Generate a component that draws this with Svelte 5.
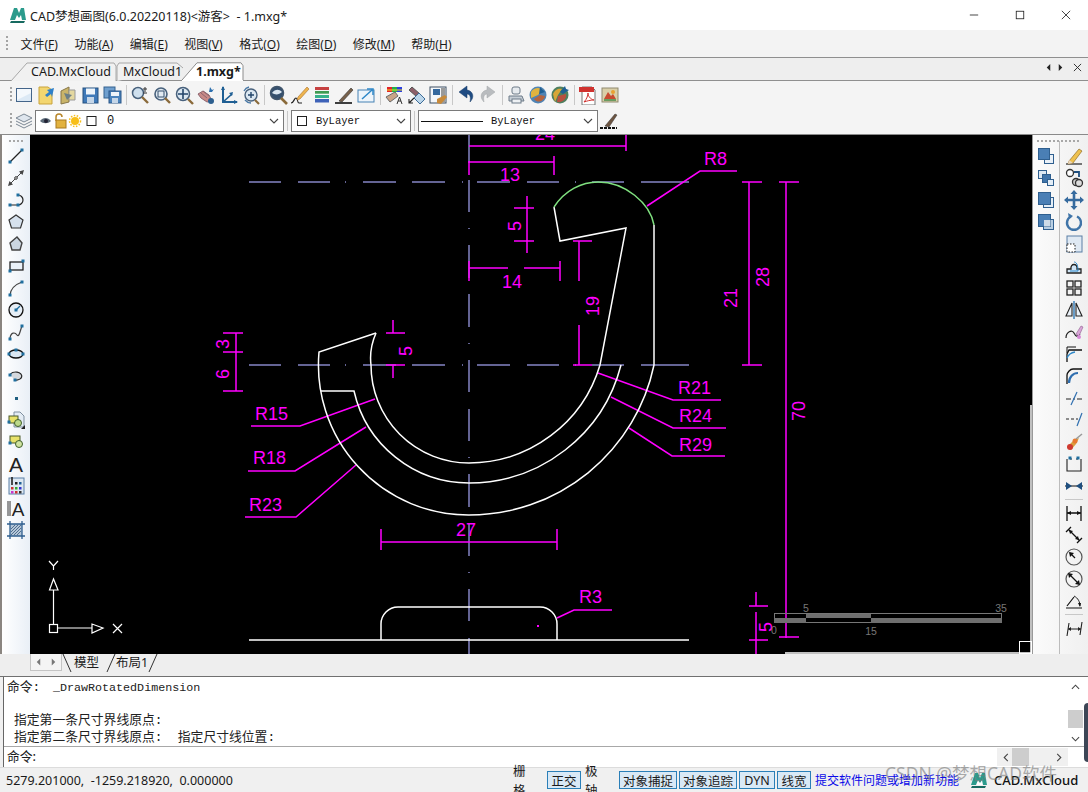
<script>
    const n = (x, y) => `<rect x="${x - 1.5}" y="${y - 1.5}" width="3" height="3" fill="#1f6f9f"/>`;
    const ln = (d, c = '#222', w = 1.2) => `<path d="${d}" fill="none" stroke="${c}" stroke-width="${w}"/>`;
    const sq = (x, y, s, f) => `<rect x="${x}" y="${y}" width="${s}" height="${s}" fill="${f}" stroke="#2f5f8f"/>`;

    const topIcons = [
        [
            `<rect x="2.5" y="3.5" width="15" height="13" fill="#dce9f5" stroke="#44658a"/><path d="M3 4h14v4L3 15z" fill="#f4f8fc"/>`,
            `<path d="M3 2h9l4 3v14H3z" fill="#f3d670" stroke="#c8a33c"/><path d="M18 3l-7 2 2 2-4 3 2 2 4-3 1 3z" fill="#2f80c9"/>`,
            `<path d="M3 6l8-4v15l-8 2z" fill="#c9b469" stroke="#87774a"/><path d="M11 5h6v10h-6z" fill="#e4d8a0" stroke="#999"/><path d="M6 8l8 2-5 5z" fill="#6c7f86"/>`,
            `<rect x="3" y="3" width="15" height="15" fill="#3f79b8" stroke="#25507f"/><rect x="6" y="3.5" width="9" height="6" fill="#eef4fa"/><rect x="7" y="12" width="7" height="6" fill="#c5d6e8"/>`,
            `<rect x="2" y="2" width="11" height="11" fill="#6f9fce" stroke="#35628f"/><rect x="7" y="6" width="12" height="12" fill="#4a83bd" stroke="#2a5687"/><rect x="9" y="7" width="8" height="4" fill="#eef4fa"/><rect x="10" y="13" width="6" height="5" fill="#c5d6e8"/>`
        ],
        [
            `<circle cx="8" cy="8" r="5.5" fill="#cfe0ee" stroke="#48617c" stroke-width="1.5"/>${ln('M12 12l6 6', '#8a6a3a', 2.4)}${ln('M15 2v5M13 4h4M13 8h4', '#333', 1)}`,
            `<circle cx="9" cy="9" r="6" fill="#e2ebf3" stroke="#48617c" stroke-width="1.6"/><rect x="6" y="6" width="6" height="6" fill="none" stroke="#34506e"/>${ln('M13 13l5 5', '#8a6a3a', 2.4)}`,
            `<circle cx="9" cy="9" r="6.5" fill="#dbe7f1" stroke="#48617c" stroke-width="1.5"/>${ln('M9 4v10M4 9h10', '#23466b', 1.6)}${ln('M14 14l5 5', '#8a6a3a', 2.4)}`,
            `<path d="M2 9l5-3 6 4 3 6-5 1-6-4z" fill="#c98a88" stroke="#8d6670"/>${ln('M5 8l6 5M7 6l6 5', '#8d6670', 1)}<path d="M14 2l2 3 2-1-2 3h-3z" fill="#2d6fae"/><circle cx="15" cy="16" r="3" fill="#2d5f8f"/>`,
            ln('M5 2v15h14', '#1f5f94', 2) + ln('M5 17l9-8', '#1f5f94', 1.6) + `<path d="M3 5l2-4 2 4zM16 15l4 2-4 2zM11 8l4-1-1 4z" fill="#1f5f94"/>`,
            `<circle cx="11" cy="10" r="6" fill="#dbe7f1" stroke="#48617c" stroke-width="1.4"/>${ln('M11 7v6M8 10h6', '#23466b', 1.4)}${ln('M4 6a8 8 0 0 1 5-4M5 15a8 8 0 0 0 6 3', '#4c7ba8', 1.3)}${ln('M15 15l4 4', '#8a6a3a', 2.2)}`
        ],
        [
            `<circle cx="9" cy="8" r="6.5" fill="#35506e" stroke="#41566c" stroke-width="1.5"/><path d="M4 8c3-4 7-4 10-1-3 3-7 3-10 1z" fill="#dbe7f1"/>${ln('M13 13l6 6', '#8a6a3a', 2.6)}`,
            ln('M1 18c3 0 3-5 5-5s1 5 3 5h3', '#222', 1.2) + `<path d="M8 12l9-10 2 2-9 10-3 1z" fill="#eeb44e" stroke="#a86f2a" stroke-width=".6"/>`,
            `<rect x="3" y="2" width="14" height="3" fill="#c64141"/><rect x="3" y="6" width="14" height="3" fill="#3f9b52"/><rect x="3" y="10" width="14" height="3" fill="#38b28a"/><rect x="3" y="14" width="14" height="3.5" fill="#3e62b8"/><path d="M2 9h16" stroke="#fff" stroke-width=".6"/>`,
            ln('M1 18h17', '#111', 1.6) + `<path d="M5 16l12-13 2 2-11 12z" fill="#77604a" stroke="#333" stroke-width=".6"/>`,
            `<rect x="2" y="5" width="16" height="12" fill="#eef5fb" stroke="#4682b4"/>${ln('M6 14l10-9M11 4h6v6', '#2f88c8', 1.5)}`
        ],
        [
            `<rect x="3" y="2" width="5" height="5" fill="#e2232a"/><rect x="8" y="2" width="5" height="5" fill="#20b04b"/><rect x="13" y="2" width="5" height="5" fill="#2b3fe0"/><path d="M3 5h15" stroke="#f0e020"/><path d="M2 12l9-5 3 4-8 6z" fill="#c9a488" stroke="#6a6a6a"/><path d="M13 19l2.5-7 2.5 7M14 16h3" fill="none" stroke="#333"/>`,
            `<path d="M3 5l3-3 8 7-3 3z" fill="#8d5f69" stroke="#555"/><path d="M8 13l5-5 6 6-5 5z" fill="#bcd6ea" stroke="#3d6d98"/>${ln('M3 18l5-5M3 14v4h4', '#222', 1.1)}`,
            `<rect x="2" y="2" width="16" height="16" fill="#f4f7fa" stroke="#3d4f62"/><rect x="5" y="4" width="7" height="6" fill="#35689d"/><rect x="13" y="3" width="4" height="15" fill="#9a9a9a"/><path d="M9 14l8-4 2 2-6 7-4-1z" fill="#c88a3a"/>`
        ],
        [
            `<path d="M6 17C1 12 3 6 9 5V1l8 6-8 6V9c-3 0-4 3-3 8z" fill="#1f4c83" stroke="#163a66" stroke-width=".5" transform="matrix(-1 0 0 1 20 0)"/>`,
            `<path d="M6 17C1 12 3 6 9 5V1l8 6-8 6V9c-3 0-4 3-3 8z" fill="#b9bcbf" stroke="#a3a6a9" stroke-width=".5"/>`
        ],
        [
            `<rect x="6" y="2" width="8" height="7" rx="2" fill="#e6eaee" stroke="#6d7b88"/><path d="M3 11h13l2 5H3z" fill="#c6ced6" stroke="#6d7b88"/><rect x="6" y="14" width="9" height="4" fill="#eef1f4" stroke="#6d7b88"/>`,
            `<circle cx="10" cy="10" r="8.5" fill="#4f84b5"/><path d="M3 7c3-5 9-5 12-2l-5 5-7 3z" fill="#e0b340"/><path d="M6 14l6-4 5 1c-1 5-7 8-11 3z" fill="#b5643f"/><path d="M12 2l5 5-6 2z" fill="#1f5f94"/>`,
            `<circle cx="10" cy="10" r="8.5" fill="#4e7f5f"/><path d="M3 9c2-5 6-6 9-5l-4 6-3 7z" fill="#d8a637"/><path d="M8 11l8-2c1 5-4 9-9 8z" fill="#b8503f"/><path d="M10 7l5-6 1 3 3 1-6 4z" fill="#1f5f94"/>`
        ],
        [
            `<path d="M4 2h10l3 3v15H4z" fill="#fff" stroke="#777"/><rect x="1" y="2" width="15" height="5" fill="#d0322f"/><path d="M6 17c3-3 4-7 4-9 0 3 2 6 6 7-4 0-7 1-10 2z" fill="none" stroke="#d0322f"/>`,
            `<rect x="2" y="3" width="16" height="14" fill="#d9cfa8" stroke="#8f8a70"/><path d="M4 14l4-7 3 4 2-2 3 5z" fill="#c84a30"/><circle cx="13" cy="7" r="2" fill="#e9a030"/><path d="M4 15h12" stroke="#4f8f4f" stroke-width="1.6"/>`
        ]
    ];

    const leftIcons = [
        ln('M4 16L16 4') + n(4, 16) + n(16, 4),
        ln('M5 15L15 5', '#444', 1) + `<circle cx="10" cy="10" r="1.3" fill="#fff" stroke="#333"/><path d="M2 18l1.5-5 3.5 3.500zM18 2l-1.500 5-3.500-3.500z" fill="#444"/>`,
        ln('M4 15H12M12 5a5 5 0 0 1 0 10') + n(4, 15) + n(12, 15) + n(12, 5),
        `<path d="M10 3l7 5-2.500 8h-9L3 8z" fill="#d6e1ed" stroke="#333" stroke-width="1.200"/>`,
        `<path d="M11 3l5 6-2 7H6L4 9z" fill="#cbd6e1" stroke="#444" stroke-width="1.400"/>`,
        `<rect x="4" y="6" width="13" height="8" fill="#eaf1f8" stroke="#111" stroke-width="1.200"/>` + n(4, 15) + n(17, 5),
        ln('M4 17Q5 8 16 4', '#444') + n(4, 17) + n(16, 4),
        `<circle cx="10" cy="10" r="7" fill="#e6eef6" stroke="#111" stroke-width="1.300"/>` + ln('M10 10l4-4', '#1f6f9f', 1.200) + n(10, 10),
        ln('M4 16c1-6 5-6 7-3s3-4 5-9', '#444') + n(4, 17) + n(16, 4),
        `<ellipse cx="10" cy="10" rx="7" ry="4" fill="#dbe7f2" stroke="#111" stroke-width="1.300"/>` + n(10, 6) + n(3, 10) + n(17, 10),
        `<path d="M4 9a6 4 0 1 1 5 5" fill="#d4d8dd" stroke="#222" stroke-width="1.200"/>` + n(4, 9) + n(9, 14),
        `<rect x="9" y="9" width="3" height="3" fill="#1f5f80"/>`,
        `<path d="M8 2h6l4 4v11H8z" fill="#e4ecf4" stroke="#8090a0"/><rect x="3" y="6" width="9" height="7" fill="#e8e26a" stroke="#4a5a2a"/><circle cx="12" cy="13" r="3.500" fill="#bcd98a" stroke="#3f5f2a"/>` + n(3, 12) + `<path d="M15 19l4-4v4z" fill="#222"/>`,
        `<rect x="4" y="4" width="10" height="7" fill="#e8e26a" stroke="#4a5a2a"/><circle cx="13" cy="12" r="3.500" fill="#cfe3a0" stroke="#3f5f2a"/>` + n(4, 11),
        `<text x="10" y="18" font-family="Liberation Sans" font-size="21" text-anchor="middle" fill="#222">A</text>`,
        `<rect x="3" y="2" width="15" height="16" fill="#dde8f2" stroke="#5a7fa5"/><rect x="9" y="6" width="2.500" height="2.500" fill="#222"/><rect x="13" y="6" width="2.500" height="2.500" fill="#1f5f94"/><rect x="5" y="11" width="2.500" height="2.500" fill="#c33"/><rect x="9" y="11" width="2.500" height="2.500" fill="#3a3"/><rect x="13" y="11" width="2.500" height="2.500" fill="#33c"/><rect x="5" y="15" width="2.500" height="2.500" fill="#c3c"/><rect x="9" y="15" width="2.500" height="2.500" fill="#c33"/><rect x="13" y="15" width="2.500" height="2.500" fill="#333"/><path d="M6 1v8" stroke="#222" stroke-width="1.600"/>`,
        ln('M2 3v15M4 3v15', '#333', 1) + `<text x="12" y="18" font-family="Liberation Sans" font-size="19" text-anchor="middle" fill="#222">A</text>`,
        `<rect x="4" y="4" width="12" height="12" fill="#b5c6d8"/>${ln('M5 15L15 5M8 15l7-7M5 12l7-7M11 15l4-4M5 9l4-4', '#4f6f8f', 1)}${ln('M1 4h18M1 16h18M4 1v18M16 1v18', '#2f5f8f', 1.300)}`
    ];

    const rightCol1 = [
        sq(8.5, 8.5, 9, '#eaf1f8') + sq(2.5, 2.5, 11, '#4a7fb5'),
        sq(2.5, 2.5, 8, '#dce8f3') + sq(6.5, 6.5, 8, '#3f74aa') + sq(11.5, 11.5, 6, '#e4eef7'),
        sq(7.5, 7.5, 10, '#e4eef7') + sq(2.5, 2.5, 12, '#4a7fb5'),
        sq(7.5, 7.5, 10, '#b9cfe3') + sq(2.5, 2.5, 12, '#4a7fb5') + `<rect x="8" y="8" width="6.500" height="6.500" fill="#cfdce8"/>`
    ];

    const rightCol2 = [
        ln('M2 18h16') + `<path d="M5 15l10-12 3 2-9 12-5 1z" fill="#efc14e" stroke="#8f6f2a" stroke-width=".7"/><path d="M4 18l1-4 4 3z" fill="#ead7c0"/>`,
        `<circle cx="6" cy="5" r="3.500" fill="#fff" stroke="#333" stroke-width="1.300"/><circle cx="12" cy="14" r="3.500" fill="#ccc" stroke="#333" stroke-width="1.300"/><circle cx="15" cy="15" r="3.500" fill="#ddd" stroke="#333" stroke-width="1.300"/>${ln('M10 4h5v5', '#1f4f7f', 1.800)}`,
        ln('M10 2v16M2 10h16', '#356a9e', 2.600) + `<path d="M10 0l3.500 4h-7zM10 20l3.500-4h-7zM0 10l4-3.500v7zM20 10l-4-3.500v7z" fill="#356a9e"/>`,
        `<path d="M7 4.500a7 7 0 1 0 6 0" fill="none" stroke="#3f74a8" stroke-width="2.400"/><path d="M4 1l5 3-4 3z" fill="#3f74a8"/>`,
        `<rect x="3" y="2" width="15" height="16" fill="#dfe9f3" stroke="#5a7fa5"/><rect x="3" y="10" width="8" height="8" fill="#fff" stroke="#222" stroke-dasharray="1.500 1.500"/>`,
        `<path d="M3 17v-4h4c-1-6 7-6 6 0h4v4z" fill="#cfe4f5" stroke="#222" stroke-width="1.300"/>${ln('M6 15h8c0-7-2-9-4-9', '#2f88c8', 1)}`,
        `<rect x="3" y="3" width="6" height="6" fill="none" stroke="#222" stroke-width="1.300"/><rect x="11" y="3" width="6" height="6" fill="none" stroke="#222" stroke-width="1.300"/><rect x="3" y="11" width="6" height="6" fill="none" stroke="#222" stroke-width="1.300"/><rect x="11" y="11" width="6" height="6" fill="none" stroke="#222" stroke-width="1.300"/>`,
        `<path d="M8 3L2 16h6zM12 3l6 13h-6z" fill="#eaf1f8" stroke="#222" stroke-width="1.100"/>${ln('M10 1v18', '#1f6fb0', 1.300)}`,
        ln('M2 16c0-6 6-9 8-5s3 4 6 1', '#222', 1.200) + `<path d="M12 12l5-8 2 1-4 9z" fill="#d9a6d8" stroke="#8f5f8f" stroke-width=".6"/><circle cx="15" cy="15" r="2" fill="#d88ad8"/>`,
        ln('M3 18v-8l2-4h13', '#111', 1.300) + ln('M3 14Q5 9 11 8', '#2f88c8', 1.300) + ln('M3 3h9M3 3v6', '#111', 1) ,
        ln('M3 18v-9c0-2 3-6 6-6h9', '#111', 1.300) + ln('M5 17c0-6 4-10 9-10', '#2f6fb0', 2.200),
        ln('M2 11h5M9 11h2M13 11h5', '#222', 1) + ln('M7 17L13 4', '#2f6fb0', 1.200),
        ln('M2 9h3M7 9h3M12 9h2', '#222', 1) + ln('M13 16L18 3', '#2f6fb0', 1.200),
        `<path d="M3 15l7-7 5-2-3 6-5 6z" fill="#d8a040"/><circle cx="6" cy="15" r="3" fill="#d03a30"/><circle cx="11" cy="9" r="2.500" fill="#e87a30"/>${ln('M12 7l6-5', '#999', 1.500)}`,
        ln('M3 5v12h14V5M6 5h2M12 5h2', '#222', 1.100) + n(6, 4) + n(14, 4),
        ln('M1 10h18', '#222', 1.100) + `<path d="M2 6v8l6-4zM18 6v8l-6-4z" fill="#1f4f7f"/>`,
        'sep',
        ln('M3 3v15M17 3v15M3 10h14', '#111', 1.300) + `<path d="M3 10l4-2v4zM17 10l-4-2v4z" fill="#111"/>`,
        ln('M2 7L7 2M13 18l5-5M5 5l10 10', '#111', 1.300) + `<path d="M5 5l4 1-3 3zM15 15l-4-1 3-3z" fill="#111"/>`,
        `<circle cx="10" cy="10" r="8" fill="none" stroke="#555" stroke-width="1.200"/>${ln('M6 6l5 5', '#111', 1.300)}<path d="M5 5l5 1-4 4z" fill="#111"/>`,
        `<circle cx="10" cy="10" r="8" fill="none" stroke="#555" stroke-width="1.200"/>${ln('M5 5l10 10', '#111', 1.300)}<path d="M4 4l5 1-4 4zM16 16l-5-1 4-4z" fill="#111"/>`,
        ln('M2 17h16M3 15l7-9', '#111', 1.200) + ln('M10 5c4 2 6 6 6 10', '#222', 1) + `<path d="M16 16l-2-4 3 0z" fill="#111"/>`,
        'sep',
        ln('M3 18l2-13M16 17l2-13M4 11h13', '#222', 1.100) + `<path d="M4 11l3-2v4zM17 11l-3-2v4z" fill="#222"/>`
    ];

    const menus = [['文件', 'F'], ['功能', 'A'], ['编辑', 'E'], ['视图', 'V'], ['格式', 'O'], ['绘图', 'D'], ['修改', 'M'], ['帮助', 'H']];

    const blueH = [[249, 281], [298, 330], [345, 346], [363, 396], [412, 445], [462, 463], [477, 510], [527, 559], [575, 576], [592, 624], [641, 689]];
    const blueV = [[135, 163], [180, 212], [228, 229], [245, 278], [294, 327], [343, 344], [360, 392], [409, 441], [457, 458], [474, 507], [523, 556], [572, 573], [589, 621], [638, 654]];

    const magenta = [
        'M469 146H626M626 135V151', 'M469 162H554M554 156V175M469 161V175',
        'M527 196V253M514 208H534M514 241H534',
        'M469 268H508M524 268H560M560 261V281M469 261V281',
        'M579 241V281M579 325V365M573 241H592M573 365H592',
        'M393 320V333M386 333H405M386 365H405M393 365V378',
        'M236 333V391M223 333H243M223 352H243M223 391H243',
        'M251 426H300L375 399', 'M248 471H295L366 427', 'M245 517H296L356 465',
        'M381 542H557M381 529V550M557 529V550',
        'M557 618L574 610H612',
        'M647 206L700 171H737', 'M598 373L673 400H721', 'M611 397L673 428H726', 'M629 428L672 456H725',
        'M749 182V365M742 182H762M742 365H762', 'M786 182V638M779 182H799M779 637H799',
        'M756 592V606M749 606H768M756 612V654M749 640H768'
    ];

    const labels = [['R15', 255, 420], ['R18', 253, 464], ['R23', 249, 511], ['R3', 579, 603], ['R8', 704, 165], ['R21', 678, 394], ['R24', 679, 422], ['R29', 679, 451]];
    const centered = [['24', 545, 140], ['13', 510, 181], ['14', 512, 288], ['27', 466, 536]];
    const turned = [['5', 515, 226], ['19', 593, 306], ['5', 406, 351], ['3', 223, 344], ['6', 223, 374], ['21', 731, 298], ['28', 763, 277], ['70', 799, 411], ['5', 766, 627]];
</script>

{#snippet logo()}
    <svg class="logo" viewBox="0 0 18 18">
        <path d="M1 14L5 2h3l2 5 2-5h3l2 12z" fill="#2b9b8c"/>
        <path d="M6 14l2-5 2 3 2-3 1 5z" fill="#fff"/>
        <path d="M2 15h14l-1 2H1z" fill="#176a60"/>
    </svg>
{/snippet}

{#snippet chevron()}
    <svg class="chev" viewBox="0 0 10 6"><path d="M1 1l4 4 4-4" fill="none" stroke="#444" stroke-width="1.100"/></svg>
{/snippet}

{#snippet ico(src)}
    <span class="ico"><svg viewBox="0 0 20 20" width="20" height="20">{@html src}</svg></span>
{/snippet}

<div class="app">
    <header class="title">
        {@render logo()}
        <span>CAD梦想画图(6.0.20220118)&lt;游客&gt; &nbsp;- 1.mxg*</span>
        <div class="winbtns">
            <svg viewBox="0 0 12 12"><path d="M1 6h10" stroke="#222"/></svg>
            <svg viewBox="0 0 12 12"><rect x="1.500" y="1.500" width="9" height="9" fill="none" stroke="#222"/></svg>
            <svg viewBox="0 0 12 12"><path d="M1 1l10 10M11 1L1 11" stroke="#222"/></svg>
        </div>
    </header>

    <nav class="menu">
        <i class="grip"></i>
        {#each menus as [label, key]}
            <span>{label}(<u>{key}</u>)</span>
        {/each}
    </nav>

    <div class="tabs">
        <div class="tab first">
            <svg viewBox="0 0 106 23" preserveAspectRatio="none"><path d="M0 23L16 5H103L105 8V23" fill="#f1f1f1" stroke="#a8a8a8"/></svg>
            <span>CAD.MxCloud</span>
        </div>
        <div class="tab second">
            <svg viewBox="0 0 66 23" preserveAspectRatio="none"><path d="M0 23V8L2 5H60L66 10" fill="#f1f1f1" stroke="#a8a8a8"/></svg>
            <span>MxCloud1</span>
        </div>
        <div class="tab active">
            <svg viewBox="0 0 62 24" preserveAspectRatio="none"><path d="M0 23L15 5H59L61 8V24H0z" fill="#fff"/><path d="M0 23L15 5H59L61 8V23" fill="none" stroke="#8a8a8a"/></svg>
            <span>1.mxg*</span>
        </div>
        <div class="tabnav">
            <svg viewBox="0 0 8 10"><path d="M6 1L2 5l4 4z" fill="#222"/></svg>
            <svg viewBox="0 0 8 10"><path d="M2 1l4 4-4 4z" fill="#222"/></svg>
            <svg class="tabx" viewBox="0 0 10 10"><path d="M1 1l8 8M9 1L1 9" stroke="#222"/></svg>
        </div>
    </div>

    <div class="toolbar one">
        <i class="grip"></i>
        {#each topIcons as group, g}
            {#if g > 0}<b class="sep"></b>{/if}
            {#each group as src}
                {@render ico(src)}
            {/each}
        {/each}
    </div>

    <div class="toolbar two">
        <i class="grip"></i>
        <span class="layericon">
            <svg viewBox="0 0 20 20" width="20" height="20">
                <path d="M10 3l8 4-8 4-8-4z" fill="#dfe6ee" stroke="#7b8794"/>
                <path d="M2 10l8 4 8-4M2 13l8 4 8-4" fill="none" stroke="#7b8794"/>
            </svg>
        </span>
        <div class="combo layer">
            <svg class="mini" viewBox="0 0 60 16" width="60" height="16">
                <path d="M2 8c3-4 8-4 11 0-3 3-8 3-11 0z" fill="#5b6a78"/><circle cx="8" cy="8" r="2" fill="#223"/>
                <path d="M18 8V4a3 3 0 0 1 6 0" fill="none" stroke="#b8862a" stroke-width="1.500"/>
                <rect x="18" y="7" width="10" height="8" fill="#e2b23f" stroke="#a97a20"/>
                <circle cx="37" cy="8" r="4" fill="#f7bf1a"/><circle cx="37" cy="8" r="5.500" fill="none" stroke="#f7bf1a" stroke-dasharray="1.500 1.500" stroke-width="1.500"/>
                <rect x="49" y="3.500" width="9" height="9" fill="#fff" stroke="#222"/>
            </svg>
            <span class="ctext zero">0</span>
            {@render chevron()}
        </div>
        <b class="sep narrow"></b>
        <div class="combo color">
            <svg class="mini" viewBox="0 0 12 12" width="12" height="12"><rect x="1.500" y="1.500" width="9" height="9" fill="#fff" stroke="#222"/></svg>
            <span class="ctext">ByLayer</span>
            {@render chevron()}
        </div>
        <b class="sep narrow"></b>
        <div class="combo ltype">
            <i class="stroke"></i>
            <span class="ctext">ByLayer</span>
            {@render chevron()}
        </div>
        <span class="brush">
            <svg viewBox="0 0 20 20" width="20" height="20">
                <path d="M1 17h17" stroke="#111" stroke-width="1.800" stroke-dasharray="3 1"/>
                <path d="M6 15l10-12 2 1-8 12z" fill="#6d5440" stroke="#333" stroke-width=".5"/>
            </svg>
        </span>
    </div>

    <main class="work">
        <aside class="left">
            <i class="gripH"></i>
            {#each leftIcons as src}
                {@render ico(src)}
            {/each}
        </aside>

        <div class="canvas">
            <svg viewBox="30 135 1002 519" width="1002" height="519">
                {#each blueH as [a, b]}
                    <path d="M{a} 182H{b}M{a} 365H{b}" stroke="#8585c5" stroke-width="1.500"/>
                {/each}
                {#each blueV as [a, b]}
                    <path d="M469 {a}V{b}" stroke="#8585c5" stroke-width="1.500"/>
                {/each}

                {#each magenta as d}
                    <path {d} fill="none" stroke="#f0f" stroke-width="1.500"/>
                {/each}
                {#each labels as [t, x, y]}
                    <text class="dim" {x} {y}>{t}</text>
                {/each}
                {#each centered as [t, x, y]}
                    <text class="dim mid" {x} {y}>{t}</text>
                {/each}
                {#each turned as [t, x, y]}
                    <text class="dim mid" {x} y={y} dy="6" transform="rotate(-90 {x} {y})">{t}</text>
                {/each}

                <g fill="none" stroke="#fff" stroke-width="1.500">
                    <path d="M376 333L319 352A150 150 0 0 0 469 515A189 189 0 0 0 654 365V225"/>
                    <path d="M321 391H354A118 118 0 0 0 469 483A157 157 0 0 0 621 365"/>
                    <path d="M376 333Q369 349 371 365A98 98 0 0 0 469 463A137 137 0 0 0 600 365Q603 350 626 228L560 241L554 207"/>
                    <path d="M249 640H689M381 640V624A17 17 0 0 1 398 607H540A17 17 0 0 1 557 624V640"/>
                </g>
                <path d="M554 207C565 190 582 182 598 182C625 182 650 203 654 225" fill="none" stroke="#7fe07f" stroke-width="1.500"/>
                <rect x="537" y="625" width="2" height="2" fill="#f0f"/>

                <!-- scale bar -->
                <rect x="774.500" y="613.500" width="227" height="9" fill="none" stroke="#777"/>
                <rect x="806" y="614" width="65" height="4" fill="#6f6f6f"/>
                <rect x="774" y="618" width="32" height="5" fill="#6f6f6f"/>
                <rect x="871" y="618" width="131" height="5" fill="#6f6f6f"/>
                <text class="scale" x="806" y="612">5</text>
                <text class="scale" x="1001" y="612">35</text>
                <text class="scale" x="774" y="634">0</text>
                <text class="scale" x="871" y="635">15</text>

                <!-- ucs icon -->
                <g fill="none" stroke="#fff" stroke-width="1.200">
                    <rect x="49.500" y="624.500" width="8" height="8"/>
                    <path d="M53.500 624V590M58 628H92"/>
                    <path d="M53.500 579L49.500 590H58zM103 628L92 624V633z"/>
                    <path d="M49 561L53.500 566L58 561M53.500 566V570M113 624L122 633M122 624L113 633"/>
                </g>

                <!-- model space border -->
                <path d="M785 653H1031V405" fill="none" stroke="#fff" stroke-width="1.500"/>
                <rect x="1019.500" y="641.500" width="12" height="12" fill="none" stroke="#fff"/>
            </svg>
        </div>

        <aside class="right">
            <i class="gripH"></i>
            <div class="cols">
                <div class="col">
                    {#each rightCol1 as src}
                        {@render ico(src)}
                    {/each}
                </div>
                <div class="col second">
                    {#each rightCol2 as src}
                        {#if src === 'sep'}
                            <b class="hsep"></b>
                        {:else}
                            {@render ico(src)}
                        {/if}
                    {/each}
                </div>
            </div>
        </aside>
    </main>

    <div class="layouts">
        <div class="navbtns">
            <svg viewBox="0 0 8 10"><path d="M6 1L2 5l4 4z" fill="#777"/></svg>
            <svg viewBox="0 0 8 10"><path d="M2 1l4 4-4 4z" fill="#777"/></svg>
        </div>
        <svg class="slant" viewBox="0 0 10 18"><path d="M1 0l8 18" stroke="#333"/></svg>
        <span class="ltab model">模型</span>
        <svg class="slant" viewBox="0 0 10 18"><path d="M9 0L1 18" stroke="#333"/></svg>
        <span class="ltab">布局1</span>
        <svg class="slant" viewBox="0 0 10 18"><path d="M9 0L1 18" stroke="#333"/></svg>
    </div>

    <section class="cmd">
        <div class="history">
            <div class="lines">
                <div>命令: <span class="mono">_DrawRotatedDimension</span></div>
                <div>&nbsp;</div>
                <div class="indent">指定第一条尺寸界线原点:</div>
                <div class="indent">指定第二条尺寸界线原点: &nbsp;指定尺寸线位置:</div>
            </div>
            <div class="vscroll">
                <svg viewBox="0 0 10 6"><path d="M1 5l4-4 4 4" fill="none" stroke="#444" stroke-width="1.200"/></svg>
                <i class="thumb"></i>
                <svg viewBox="0 0 10 6"><path d="M1 1l4 4 4-4" fill="none" stroke="#444" stroke-width="1.200"/></svg>
            </div>
        </div>
        <div class="input">
            <span>命令:</span>
            <div class="hscroll">
                <svg viewBox="0 0 6 10"><path d="M5 1L1 5l4 4" fill="none" stroke="#444" stroke-width="1.200"/></svg>
                <i class="hthumb"></i>
                <svg viewBox="0 0 6 10"><path d="M1 1l4 4-4 4" fill="none" stroke="#444" stroke-width="1.200"/></svg>
            </div>
        </div>
    </section>

    <footer class="status">
        <span class="coords">5279.201000, &nbsp;-1259.218920, &nbsp;0.000000</span>
        <div class="toggles">
            <span class="flat">栅格</span>
            <span class="on">正交</span>
            <span class="flat">极轴</span>
            <span class="on wide">对象捕捉</span>
            <span class="on wide">对象追踪</span>
            <span class="on">DYN</span>
            <span class="on">线宽</span>
        </div>
        <span class="link">提交软件问题或增加新功能</span>
        {@render logo()}
        <span class="brand">CAD.MxCloud</span>
    </footer>

    <div class="artefact"></div>
    <div class="watermark">CSDN @梦想CAD软件</div>
</div>

<style>
    :global(body) {
        margin: 0;
        background: #f0f0f0;
    }

    .app {
        position: relative;
        display: flex;
        flex-direction: column;
        width: 1088px;
        height: 792px;
        overflow: hidden;
        font-family: "Noto Sans", "Noto Sans CJK SC", sans-serif;
        font-size: 12px;
        color: #1a1a1a;
        background: #f0f0f0;
    }

    .title {
        display: flex;
        align-items: center;
        height: 30px;
        padding-left: 9px;
        background: #fff;
        font-size: 12.5px;
        flex: none;
    }

    .logo {
        width: 18px;
        height: 18px;
        margin-right: 3px;
        flex: none;
    }

    .winbtns {
        display: flex;
        gap: 36px;
        margin-left: auto;
        margin-right: 17px;
    }

    .winbtns svg {
        width: 10px;
        height: 10px;
    }

    .menu {
        display: flex;
        align-items: center;
        gap: 16.500px;
        height: 27px;
        padding-left: 6px;
        background: #f3f3f3;
        flex: none;
    }

    .menu .grip {
        margin-right: -4px;
    }

    .grip {
        display: block;
        width: 2px;
        height: 16px;
        flex: none;
        background: repeating-linear-gradient(to bottom, #a4a4a4 0 2px, transparent 2px 4px);
    }

    .gripH {
        display: block;
        width: 18px;
        height: 2px;
        margin: 5px auto 3px;
        background: repeating-linear-gradient(to right, #a8a8a8 0 2px, transparent 2px 4px);
    }

    .tabs {
        position: relative;
        display: flex;
        height: 24px;
        box-sizing: border-box;
        padding-left: 11px;
        background: #eeeeee;
        border-top: 1px solid #8f8f8f;
        border-bottom: 1px solid #8f8f8f;
        flex: none;
    }

    .tab {
        position: relative;
        display: flex;
        align-items: center;
        height: 23px;
        flex: none;
        font-size: 12.500px;
    }

    .tab svg {
        position: absolute;
        inset: 0;
        width: 100%;
        height: 100%;
        overflow: visible;
    }

    .tab span {
        position: relative;
        padding-top: 4px;
    }

    .tab.first {
        width: 106px;
        padding-left: 20px;
        box-sizing: border-box;
    }

    .tab.second {
        width: 66px;
        padding-left: 6px;
        box-sizing: border-box;
    }

    .tab.active {
        width: 62px;
        margin-left: -1px;
        padding-left: 14px;
        box-sizing: border-box;
        font-weight: 700;
    }

    .tabnav {
        display: flex;
        align-items: center;
        gap: 5px;
        margin-left: auto;
        margin-right: 6px;
        padding-bottom: 3px;
    }

    .tabnav svg {
        width: 7px;
        height: 9px;
    }

    .tabnav .tabx {
        width: 9px;
        margin-left: 4px;
    }

    .toolbar {
        display: flex;
        align-items: center;
        background: #f4f4f4;
        padding-left: 10px;
        flex: none;
    }

    .toolbar.one {
        height: 27px;
    }

    .toolbar.one .grip {
        margin-right: 1px;
    }

    .toolbar.two {
        height: 27px;
        border-bottom: 1px solid #8a8a8a;
        box-sizing: border-box;
    }

    .ico {
        display: flex;
        align-items: center;
        justify-content: center;
        width: 22px;
        height: 22px;
        flex: none;
    }

    .sep {
        display: block;
        width: 1px;
        height: 20px;
        margin: 0 2.500px;
        background: #c8c8c8;
        flex: none;
    }

    .sep.narrow {
        margin: 0 3px;
        height: 20px;
    }

    .layericon {
        display: flex;
        justify-content: center;
        width: 23px;
        flex: none;
    }

    .combo {
        display: flex;
        align-items: center;
        height: 22px;
        box-sizing: border-box;
        background: #fff;
        border: 1px solid #7a7a7a;
        flex: none;
    }

    .combo.layer {
        width: 249px;
        padding-left: 2px;
    }

    .combo.color {
        width: 120px;
        padding-left: 4px;
    }

    .combo.ltype {
        width: 180px;
        padding-left: 2px;
    }

    .ctext {
        font-family: "Liberation Mono", monospace;
        font-size: 10.500px;
        color: #111;
        margin-left: 8px;
    }

    .ctext.zero {
        margin-left: 9px;
        font-size: 12px;
    }

    .stroke {
        display: block;
        width: 62px;
        height: 1px;
        background: #111;
        margin-right: 0;
        flex: none;
    }

    .chev {
        width: 10px;
        height: 6px;
        margin-left: auto;
        margin-right: 4px;
        flex: none;
    }

    .brush {
        display: flex;
        margin-left: 1px;
    }

    .work {
        display: flex;
        height: 519px;
        flex: none;
    }

    .left {
        width: 28px;
        flex: none;
        border-left: 2px solid #8a8580;
        background: linear-gradient(to right, #ffffff, #e9eff6);
    }

    .left .gripH {
        width: 14px;
    }

    .left .ico {
        margin: 0 auto;
        transform: translateX(0);
    }

    .canvas {
        width: 1002px;
        height: 519px;
        flex: none;
        background: #000;
    }

    .canvas svg {
        display: block;
    }

    .dim {
        font-family: "Liberation Sans", sans-serif;
        font-size: 18px;
        fill: #f0f;
    }

    .mid {
        text-anchor: middle;
    }

    .scale {
        font-family: "Liberation Sans", sans-serif;
        font-size: 10.500px;
        fill: #777;
        text-anchor: middle;
    }

    .right {
        width: 56px;
        flex: none;
        background: linear-gradient(to right, #fbfbfb, #f0f0f0);
        border-left: 1px solid #999;
        box-sizing: border-box;
    }

    .right .gripH {
        width: 42px;
        margin-left: 4px;
    }

    .cols {
        display: flex;
    }

    .col {
        display: flex;
        flex-direction: column;
        width: 25px;
        padding-left: 2px;
    }

    .col.second {
        width: 26px;
        padding-left: 3px;
        border-left: 1px solid #bcbcbc;
        height: 509px;
        margin-top: -4px;
        padding-top: 4px;
    }

    .hsep {
        display: block;
        width: 18px;
        height: 1px;
        margin: 2px;
        background: #c8c8c8;
        flex: none;
    }

    .layouts {
        display: flex;
        align-items: flex-start;
        height: 23px;
        padding-left: 30px;
        box-sizing: border-box;
        background: #eeeeee;
        border-bottom: 1px solid #707070;
        flex: none;
    }

    .navbtns {
        display: flex;
        align-items: center;
        justify-content: space-around;
        width: 32px;
        height: 17px;
        box-sizing: border-box;
        border: 1px solid #c4c4c4;
        border-top: none;
        background: #f4f4f4;
    }

    .navbtns svg {
        width: 7px;
        height: 10px;
    }

    .slant {
        width: 10px;
        height: 18px;
        flex: none;
    }

    .ltab {
        font-size: 12.500px;
        line-height: 17px;
    }

    .ltab.model {
        width: 34px;
        padding-left: 2px;
        box-sizing: border-box;
    }

    .cmd {
        display: flex;
        flex-direction: column;
        height: 90px;
        margin-left: 3px;
        border-left: 1px solid #666;
        background: #fff;
        flex: none;
    }

    .history {
        display: flex;
        height: 70px;
        box-sizing: border-box;
        border-bottom: 1px solid #a8a8a8;
    }

    .lines {
        flex: 1;
        padding: 3px 0 0 3px;
        font-family: "Liberation Mono", "Noto Sans CJK SC", monospace;
        font-size: 12.800px;
        line-height: 16.670px;
        color: #222;
        white-space: nowrap;
    }

    .mono {
        font-size: 11.700px;
        margin-left: 5px;
    }

    .indent {
        padding-left: 7px;
    }

    .vscroll {
        display: flex;
        flex-direction: column;
        align-items: center;
        width: 15px;
        margin-right: 5px;
        padding-top: 7px;
        flex: none;
    }

    .vscroll svg {
        width: 9px;
        height: 6px;
        flex: none;
    }

    .thumb {
        display: block;
        width: 15px;
        height: 18px;
        margin: 20px 0 8px;
        background: #cdcdcd;
    }

    .input {
        display: flex;
        flex: 1;
        padding-left: 3px;
        font-family: "Noto Sans CJK SC", sans-serif;
        font-size: 12.800px;
        line-height: 18px;
    }

    .hscroll {
        display: flex;
        align-items: center;
        justify-content: space-between;
        box-sizing: border-box;
        width: 71px;
        height: 18px;
        margin-left: auto;
        margin-right: 20px;
        margin-top: 1px;
        padding: 0 6px;
        background: #f0f0f0;
        position: relative;
    }

    .hscroll svg {
        width: 6px;
        height: 9px;
    }

    .hthumb {
        display: block;
        width: 17px;
        height: 18px;
        background: #cdcdcd;
        margin-right: 23px;
        margin-left: -1px;
    }

    .status {
        display: flex;
        align-items: center;
        flex: 1;
        padding-left: 6px;
        background: #f0f0f0;
        border-top: 1px solid #dcdcdc;
    }

    .coords {
        width: 507px;
        flex: none;
        font-size: 12.500px;
        white-space: nowrap;
    }

    .toggles {
        display: flex;
        align-items: center;
        gap: 2px;
        flex: none;
        font-size: 12.500px;
    }

    .toggles span {
        display: flex;
        align-items: center;
        justify-content: center;
        box-sizing: border-box;
        height: 18px;
    }

    .flat {
        width: 24px;
        margin: 0 8px 0 0;
    }

    .flat + .on + .flat {
        margin: 0 8px 0 2px;
    }

    .on {
        width: 34px;
        background: #d9e9f6;
        border: 1px solid #2a7fb8;
    }

    .toggles span.wide {
        width: 58px;
    }

    .toggles span:nth-child(6) {
        width: 36px;
    }

    .link {
        margin-left: 4px;
        width: 155px;
        flex: none;
        color: #0a0ae8;
        font-size: 12px;
        white-space: nowrap;
    }

    .brand {
        font-size: 13px;
        font-weight: 500;
        color: #111;
        margin-left: 3px;
    }

    .artefact {
        position: absolute;
        left: 1084px;
        top: 703px;
        width: 8px;
        height: 59px;
        border-radius: 5px;
        background: #3c4656;
    }

    .watermark {
        position: absolute;
        left: 885px;
        top: 760px;
        font-family: "Noto Sans", "Noto Sans CJK SC", sans-serif;
        font-size: 17.500px;
        color: rgba(120, 120, 120, 0.6);
        white-space: nowrap;
    }
</style>
